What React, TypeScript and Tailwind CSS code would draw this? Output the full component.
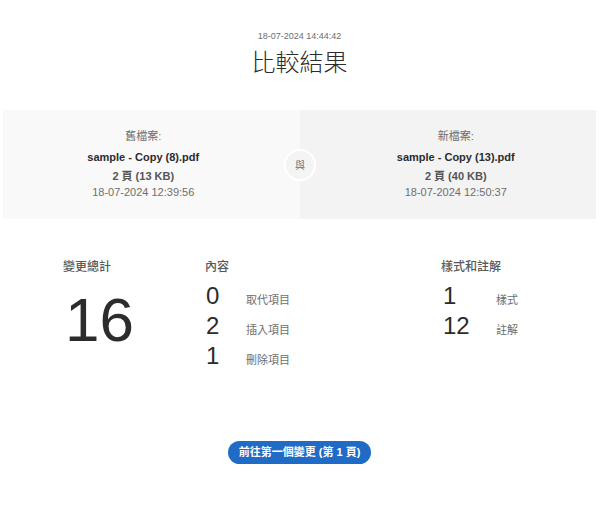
import React from "react";

const font = { fontFamily: '"Liberation Sans", Arial, "Noto Sans CJK TC", sans-serif' };

function FilePanel({ label, name, pages, date, side }: { label: string; name: string; pages: string; date: string; side: "left" | "right" }) {
  return (
    <div
      className={
        "flex-1 flex flex-col items-center pt-[19px] pb-[20px] " +
        (side === "left" ? "bg-[#f9f9f9] pr-[16px]" : "bg-[#f3f3f3] pl-[16px]")
      }
    >
      <div className="text-[11px] leading-[14px] text-[#6e6e6e]">{label}</div>
      <div className="mt-[7px] text-[11px] leading-[14px] font-bold text-[#2c2c2c]">{name}</div>
      <div className="mt-[5px] text-[11px] leading-[14px] font-bold text-[#555]">{pages}</div>
      <div className="mt-[2px] text-[11px] leading-[14px] text-[#6e6e6e]">{date}</div>
    </div>
  );
}

function Row({ value, label, w }: { value: string; label: string; w: string }) {
  return (
    <div className="flex items-baseline h-[30px] leading-[30px]">
      <div className={"text-[24px] text-[#2c2c2c] " + w}>{value}</div>
      <div className="text-[11px] text-[#6e6e6e]">{label}</div>
    </div>
  );
}

export default function App() {
  return (
    <div className="w-[612px] h-[519px] bg-white" style={font}>
      <div className="w-[593px] ml-[3px] flex flex-col items-center pt-[30px]">
        <div className="text-[9px] leading-[12px] text-[#6e6e6e]">18-07-2024 14:44:42</div>
        <div className="mt-[5px] text-[24px] leading-[32px] text-[#2c2c2c] font-light">比較結果</div>

        <div className="relative mt-[31px] w-full flex">
          <FilePanel side="left" label="舊檔案:" name="sample - Copy (8).pdf" pages="2 頁 (13 KB)" date="18-07-2024 12:39:56" />
          <FilePanel side="right" label="新檔案:" name="sample - Copy (13).pdf" pages="2 頁 (40 KB)" date="18-07-2024 12:50:37" />
          <div className="absolute left-[281px] top-[39px] w-[32px] h-[32px] rounded-full bg-[#f4f4f4] border-2 border-white flex items-center justify-center text-[10px] text-[#6e6e6e]">
            與
          </div>
        </div>

        <div className="w-full flex pl-[60px] mt-[40px]">
          <div className="w-[142px] flex flex-col">
            <div className="text-[12px] leading-[16px] font-medium text-[#595959]">變更總計</div>
            <div className="mt-[14px] ml-[2px] text-[62px] leading-none text-[#2c2c2c]">16</div>
          </div>
          <div className="w-[236px] flex flex-col">
            <div className="text-[12px] leading-[16px] font-medium text-[#595959]">內容</div>
            <div className="mt-[6px] ml-[1px] flex flex-col">
              <Row value="0" label="取代項目" w="w-[40px]" />
              <Row value="2" label="插入項目" w="w-[40px]" />
              <Row value="1" label="刪除項目" w="w-[40px]" />
            </div>
          </div>
          <div className="flex flex-col">
            <div className="text-[12px] leading-[16px] font-medium text-[#595959]">樣式和註解</div>
            <div className="mt-[6px] ml-[2px] flex flex-col">
              <Row value="1" label="樣式" w="w-[53px]" />
              <Row value="12" label="註解" w="w-[53px]" />
            </div>
          </div>
        </div>

        <button className="mt-[70px] h-[23px] px-[11px] rounded-full bg-[#1f6bc5] text-white text-[11px] font-bold leading-[23px]">
          前往第一個變更 (第 1 頁)
        </button>
      </div>
    </div>
  );
}
